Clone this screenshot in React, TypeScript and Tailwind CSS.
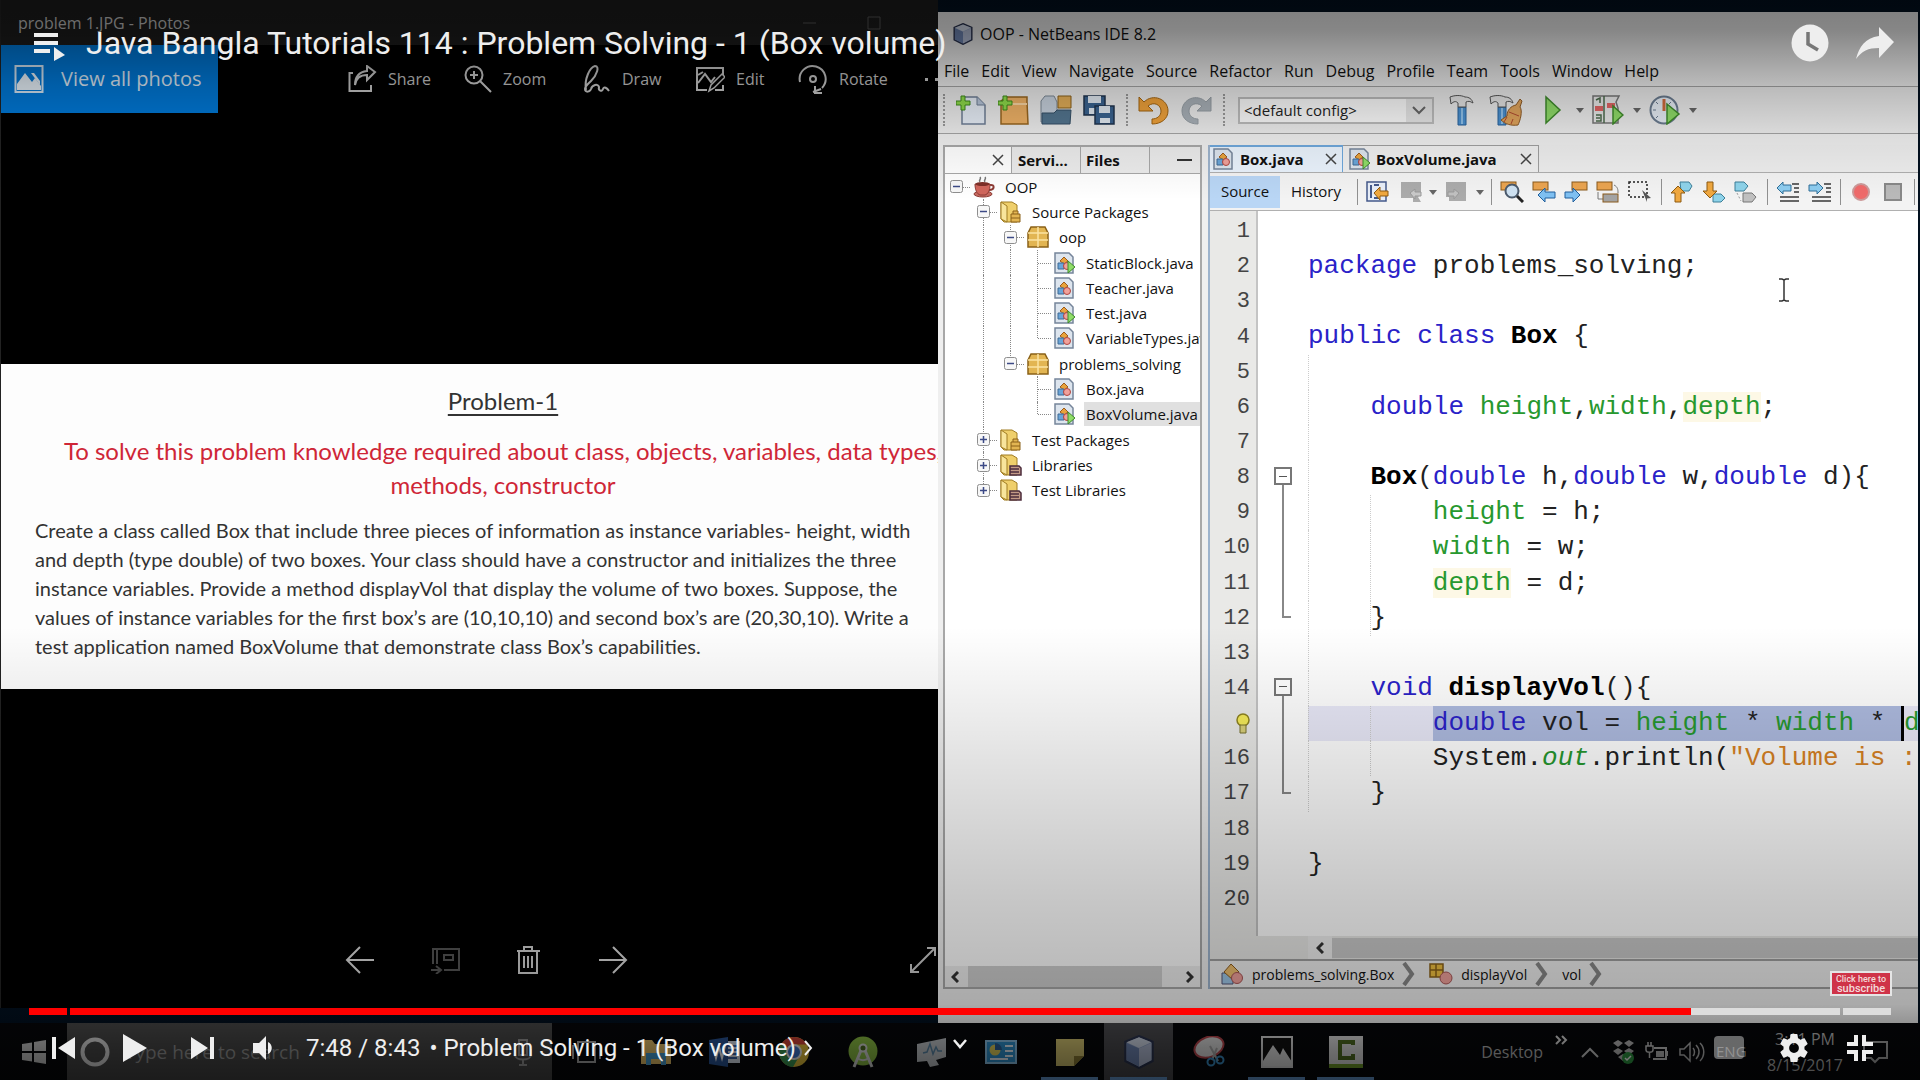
import React from "react";

type Kids = { children?: React.ReactNode };

const UI = "font-['Open_Sans','Noto_Sans',sans-serif]";

function Svg({ w, h, box, children, fill = "none" }: Kids & { w: number; h: number; box?: string; fill?: string }) {
  return (
    <svg width={w} height={h} viewBox={box ?? `0 0 ${w} ${h}`} fill={fill} aria-hidden="true" className="shrink-0">
      {children}
    </svg>
  );
}

/* ---------- Photos window ---------- */

function PhotoTool({ label, children, width }: Kids & { label: string; width: string }) {
  return (
    <button className={`flex shrink-0 items-center gap-[11px] text-left ${width}`}>
      {children}
      <span className="text-[16px] leading-6">{label}</span>
    </button>
  );
}

const bodyLines = [
  "Create a class called Box that include three pieces of information as instance variables- height, width",
  "and depth (type double) of two boxes. Your class should have a constructor and initializes the three",
  "instance variables. Provide a method displayVol that display the volume of two boxes. Suppose, the",
  "values of instance variables for the first box’s are (10,10,10) and second box’s are (20,30,10). Write a",
  "test application named BoxVolume that demonstrate class Box’s capabilities.",
];

function PhotosWindow() {
  return (
    <section className={`flex min-w-0 flex-col overflow-hidden border-l border-[#222] bg-black ${UI}`}>
      <header className="flex h-[45px] items-center bg-[#1c1c1c] pr-[6px] pl-[17px] text-[#c4c4c4]">
        <h2 className="flex-1 text-[16px] leading-6">problem 1.JPG - Photos</h2>
        <button aria-label="Minimize" className="w-[65px] opacity-40">
          <Svg w={16} h={16}><path d="M1 8h13" stroke="#aaa" /></Svg>
        </button>
        <button aria-label="Maximize" className="w-[65px] opacity-40">
          <Svg w={16} h={16}><path d="M1 2h12v12H1z" stroke="#aaa" /></Svg>
        </button>
      </header>
      <div className="flex h-[68px] text-[#c2c2c2]">
        <button className="flex w-[217px] shrink-0 items-center gap-[17px] bg-[#0078d7] pl-[13px] text-[#dce9f6]">
          <Svg w={30} h={30}>
            <path d="M1.500 2h27v26h-27z" stroke="#d5e6f5" strokeWidth="2" />
            <path d="M3 26V20l8-11 7 9 3-4 6 8v4z" fill="#e6f0f8" />
            <path d="m17 9 9 12v-4l-6-8z" fill="#e6f0f8" />
          </Svg>
          <span className="text-[20px] leading-7">View all photos</span>
        </button>
        <div className="flex flex-1 overflow-hidden pb-px pl-[130px]">
          <PhotoTool label="Share" width="w-[115px]">
            <Svg w={29} h={28}>
              <path d="M5 8H1.500v18H23v-6M7 20c1-7 5-10 12-10v5l8-8-8-6v5C11 7 7 12 7 20Z" stroke="#c8c8c8" strokeWidth="2" />
            </Svg>
          </PhotoTool>
          <PhotoTool label="Zoom" width="w-[120px]">
            <Svg w={29} h={28}>
              <circle cx="11" cy="10" r="8.500" stroke="#c8c8c8" strokeWidth="2" />
              <path d="m17 16 11 11M7 10h8M11 6v8" stroke="#c8c8c8" strokeWidth="2" />
            </Svg>
          </PhotoTool>
          <PhotoTool label="Draw" width="w-[112px]">
            <Svg w={28} h={28}>
              <path d="M3 25C1 14 7 2 12 1c5 0 2 9-4 15-3 3-6 5-6 8 0 4 5 3 6 0 1-4 7-6 8-2-1 4 3 5 4 2s4-1 6 2" stroke="#c8c8c8" strokeWidth="2" />
            </Svg>
          </PhotoTool>
          <PhotoTool label="Edit" width="w-[103px]">
            <Svg w={30} h={28}>
              <path d="M12 25H2V3h26v7M28 20v5h-8M3 18l7-9 6 8 4-5M3 10l5-3" stroke="#c8c8c8" strokeWidth="2" />
              <path d="m14 26 2-6L27 9l3 3-11 11z" stroke="#c8c8c8" strokeWidth="1.500" />
            </Svg>
          </PhotoTool>
          <PhotoTool label="Rotate" width="w-[125px]">
            <Svg w={30} h={30}>
              <path d="M2 18A13 13 0 1 1 24 24M15 28l8-3M17 22v7h7" stroke="#c8c8c8" strokeWidth="2" />
              <circle cx="15" cy="15" r="3" stroke="#c8c8c8" strokeWidth="2" />
            </Svg>
          </PhotoTool>
          <button aria-label="More" className="flex shrink-0 items-center">
            <Svg w={18} h={6}><path d="M2 2h3v3H2zM12 2h3v3h-3z" fill="#c8c8c8" /></Svg>
          </button>
        </div>
      </div>
      <div className="flex flex-1 flex-col justify-center">
        <article className="overflow-hidden bg-[#fdfdfd] pt-[20px] pb-[28px] font-['Lato',sans-serif] whitespace-nowrap text-[#333]">
          <div className="w-[1004px] text-center">
            <h3 className="text-[24px] leading-[34px] underline underline-offset-4">Problem-1</h3>
            <p className="mt-[16px] text-[24px] leading-[34px] text-[#cf2637]">
              To solve this problem knowledge required about class, objects, variables, data types,
              <br />
              methods, constructor
            </p>
          </div>
          <div className="mt-[14px] pl-[34px] text-[20px] leading-[29px]">
            {bodyLines.map((l) => (
              <p key={l}>{l}</p>
            ))}
          </div>
        </article>
      </div>
      <footer className="flex h-[68px] items-start pt-[6px] pl-[344px]">
        <button aria-label="Previous" className="w-[85px] shrink-0">
          <Svg w={30} h={28}><path d="M29 14H2M15 1 2 14l13 13" stroke="#ddd" strokeWidth="2" /></Svg>
        </button>
        <button aria-label="Slideshow" className="w-[86px] shrink-0">
          <Svg w={31} h={28}><path d="M3 18V3h26v21H14M7 4v14M14 9h9v5h-9zM1 24h9M6 20l5 4-5 4" stroke="#555" strokeWidth="2" /></Svg>
        </button>
        <button aria-label="Delete" className="w-[82px] shrink-0">
          <Svg w={25} h={28}><path d="M1 5h23M8 4V1h8v3M3 5v22h18V5M8 10v12M12 10v12M16 10v12" stroke="#d2d2d2" strokeWidth="2" /></Svg>
        </button>
        <button aria-label="Next" className="flex-1">
          <Svg w={30} h={28}><path d="M1 14h27M15 1l13 13-13 13" stroke="#ddd" strokeWidth="2" /></Svg>
        </button>
        <button aria-label="Full screen" className="shrink-0 pr-px">
          <Svg w={28} h={28}><path d="m2 26 24-24M18 2h8v8M2 18v8h8" stroke="#ccc" strokeWidth="2" /></Svg>
        </button>
      </footer>
    </section>
  );
}

/* ---------- NetBeans ---------- */

const menus = ["File", "Edit", "View", "Navigate", "Source", "Refactor", "Run", "Debug", "Profile", "Team", "Tools", "Window", "Help"];

function Cube({ size }: { size: number }) {
  return (
    <Svg w={size} h={size} box="0 0 30 30">
      <path d="M15 1 27 6v17l-12 6-12-6V6z" fill="#8fa2c8" stroke="#2b3450" strokeWidth="2" />
      <path d="M15 12 4 7v15l11 6z" fill="#6f86b4" />
      <path d="m15 12 11-5v15l-11 6z" fill="#b5bfd8" />
      <path d="m15 2 11 4.500-11 5L4 6.500z" fill="#d3dbea" />
    </Svg>
  );
}

function Cell({ label, w, children }: Kids & { label: string; w: string }) {
  return (
    <button aria-label={label} className={`flex shrink-0 items-center justify-center ${w}`}>
      {children}
    </button>
  );
}

function Caret() {
  return <Svg w={8} h={6}><path d="M0 1h8L4 6z" fill="#666" /></Svg>;
}

function Grip() {
  return <span className="h-8 w-1 shrink-0 border-l-2 border-dotted border-[#999]" />;
}

function Plus() {
  return <path d="M5 1h4v5h5v4H9v5H5v-5H0V6h5z" fill="#8fdc4a" stroke="#3c8a1b" />;
}

function Hammer() {
  return (
    <>
      <path d="M9 12h8v18H9z" fill="#4a90cf" stroke="#28629c" />
      <path d="M12 13h2v16h-2z" fill="#8fc1ea" />
      <path d="M1 2c5-2 11-2 15 0 4 0 7 2 8 6-3-2-5-2-7-1v5H9V8C7 6 5 6 2 9z" fill="#e4e4e4" stroke="#555" />
    </>
  );
}

function MainToolbar() {
  return (
    <div className="flex h-[48px] items-center border-y border-[#a5a5a5] bg-[#ededed] pl-[5px]">
      <Grip />
      <div className="ml-[2px] flex">
        <Cell label="New file" w="w-[43px]">
          <Svg w={30} h={30}>
            <path d="M6 2h15l8 8v19H6z" fill="#e8eff8" stroke="#6f7f95" strokeWidth="1.500" />
            <path d="M21 2v8h8" fill="#b8c6da" stroke="#6f7f95" />
            <Plus />
          </Svg>
        </Cell>
        <Cell label="New project" w="w-[42px]">
          <Svg w={31} h={30}>
            <path d="M3 6 8 2h21v5l1 22H3z" fill="#efb266" stroke="#98651f" strokeWidth="1.500" />
            <path d="M4 9h25" stroke="#fbd7a4" strokeWidth="2" />
            <Plus />
          </Svg>
        </Cell>
        <Cell label="Open project" w="w-[43px]">
          <Svg w={32} h={30}>
            <path d="M1 27V6l4-5h9l3 6v20z" fill="#c8d2de" stroke="#7b8794" />
            <path d="M18 1h13v12H18z" fill="#e3ae58" stroke="#8a6118" />
            <path d="M2 18h12l3-3h14l-1 14H2z" fill="#53758f" stroke="#344f66" />
          </Svg>
        </Cell>
        <Cell label="Save all" w="w-[43px]">
          <Svg w={32} h={30}>
            <path d="M1 1h21v19H1z" fill="#3a6390" stroke="#20344e" strokeWidth="1.500" />
            <path d="M5 1h13v7H5zM6 13h11v6H6z" fill="#e3ebf3" />
            <path d="M12 11h19v18H12z" fill="#3a6390" stroke="#20344e" strokeWidth="1.500" />
            <path d="M16 11h11v7H16zM17 23h10v5H17z" fill="#e3ebf3" />
          </Svg>
        </Cell>
      </div>
      <span className="ml-[6px] flex"><Grip /></span>
      <div className="ml-[3px] flex">
        <Cell label="Undo" w="w-[42px]">
          <Svg w={32} h={30}>
            <path d="M1 2v14h14l-5-5c6-5 13-1 13 5 0 5-4 8-9 8v5c9 0 16-5 16-13C30 4 15-2 6 7z" fill="#f0a23a" stroke="#a3640f" />
          </Svg>
        </Cell>
        <Cell label="Redo" w="w-[42px]">
          <Svg w={32} h={30}>
            <path d="M31 2v14H17l5-5c-6-5-13-1-13 5 0 5 4 8 9 8v5C9 29 2 24 2 16 2 4 17-2 26 7z" fill="#a9b1b8" stroke="#969ea5" />
          </Svg>
        </Cell>
      </div>
      <span className="ml-[6px] flex"><Grip /></span>
      <div className="relative ml-[11px] flex w-[196px] shrink-0 items-center">
        <select aria-label="Project configuration" className="h-[27px] w-full appearance-none border-2 border-[#bcbcbc] bg-[#fbfbfb] pl-1 text-[15px] leading-5 text-[#222]">
          <option>&lt;default config&gt;</option>
        </select>
        <span className="pointer-events-none absolute top-[2px] right-[2px] flex h-[23px] w-[26px] items-center justify-center bg-[#e6e6e6]">
          <Svg w={14} h={9}><path d="m1 1 6 6 6-6" stroke="#666" strokeWidth="2" /></Svg>
        </span>
      </div>
      <div className="ml-[7px] flex">
        <Cell label="Build" w="w-[42px]"><Svg w={26} h={31}><Hammer /></Svg></Cell>
        <Cell label="Clean and build" w="w-[46px]">
          <Svg w={34} h={31}>
            <Hammer />
            <path d="M27 10l4-6 2 2-2 6c3 4 0 14-2 18-7 1-13-1-17-5l6-4c0-6 4-10 9-11z" fill="#e0a45c" stroke="#8d5a26" />
            <path d="m20 17 10 4M18 22l-3 5M24 24l-2 5" stroke="#b04a2f" />
          </Svg>
        </Cell>
        <Cell label="Run project" w="w-[47px]">
          <Svg w={18} h={30}><path d="M2 2v26l14-13z" fill="#8fdc68" stroke="#3f8a2c" strokeWidth="1.500" /></Svg>
        </Cell>
        <Cell label="Run options" w="w-[8px]"><Caret /></Cell>
        <Cell label="Debug project" w="w-[48px]">
          <Svg w={32} h={30}>
            <path d="M1 1h26l-3 6 2 6v15H1z" fill="#e8e8e8" stroke="#777" strokeWidth="1.500" />
            <path d="M12 1v27M4 5l4-2v5M4 20h5v6H4M4 23h4" stroke="#4c6b4c" strokeWidth="1.500" />
            <path d="M3 11h8v5H3zM15 8h8v5h-8z" fill="#e26464" />
            <path d="M21 11v18l10-9z" fill="#8fdc68" stroke="#3f8a2c" strokeWidth="1.500" />
          </Svg>
        </Cell>
        <Cell label="Debug options" w="w-[10px]"><Caret /></Cell>
        <Cell label="Profile project" w="w-[46px]">
          <Svg w={32} h={30}>
            <circle cx="15" cy="15" r="13.500" fill="#e7eef6" stroke="#6b7c90" strokeWidth="2" />
            <path d="M15 4v12" stroke="#d06a3c" strokeWidth="3" />
            <path d="M4 15h3M7 7l2 2M22 7l-2 2M7 23l2-2" stroke="#6b7c90" />
            <path d="M18 9v20l12-10z" fill="#8fdc68" stroke="#3f8a2c" strokeWidth="1.500" />
          </Svg>
        </Cell>
        <Cell label="Profile options" w="w-[10px]"><Caret /></Cell>
      </div>
    </div>
  );
}

type Kind = "cup" | "srcFolder" | "libFolder" | "pkg" | "java" | "javaMain";

function JavaFile({ main }: { main?: boolean }) {
  return (
    <Svg w={22} h={22}>
      <path d="M1 1h14l4 4v16H1z" fill="#dde5ee" stroke="#76859a" strokeWidth="1.500" />
      <path d="m10 5 4 4-4 3-4-3z" fill="#e8a33c" stroke="#9b5a1c" />
      <path d="M4 11h6v6H4z" fill="#6aa5d8" stroke="#3f6b95" />
      <circle cx="13" cy="14" r="3.500" fill="#f0a19b" stroke="#b0453f" />
      {main && <path d="M14 9v12l7-6z" fill="#8fdc68" stroke="#3f8a2c" />}
    </Svg>
  );
}

function TreeIcon({ kind }: { kind: Kind }) {
  if (kind === "java" || kind === "javaMain") return <JavaFile main={kind === "javaMain"} />;
  if (kind === "cup")
    return (
      <Svg w={22} h={22}>
        <path d="M7 6c-2-2 2-3 0-5M12 6c-2-2 2-3 0-5" stroke="#777" strokeWidth="1.500" />
        <ellipse cx="10" cy="18" rx="9" ry="3" fill="#c66a60" stroke="#8d3a34" />
        <path d="M2 8h15c0 7-2 10-5 11H7C4 18 2 14 2 8Z" fill="#d0665c" stroke="#8d3a34" />
        <path d="M17 9c5-1 5 5-1 5" stroke="#8d3a34" strokeWidth="2" />
        <ellipse cx="9.500" cy="8" rx="7" ry="2" fill="#7d3029" />
      </Svg>
    );
  if (kind === "pkg")
    return (
      <Svg w={22} h={22}>
        <path d="m1 7 3-6h14l3 6v14H1z" fill="#e2b552" stroke="#8a6118" strokeWidth="1.500" />
        <path d="M1 7h20M11 1v20M1 14h20" stroke="#fbe3a2" strokeWidth="1.500" />
      </Svg>
    );
  return (
    <Svg w={22} h={22}>
      <path d="M1 1h11l5 3v17H4l-3-3z" fill="#efcf6b" stroke="#a07c22" />
      <path d="M1 1l6 4v16l-6-3z" fill="#f8e59c" stroke="#a07c22" />
      {kind === "srcFolder" ? (
        <path d="M11 13h9v8h-9zM13 13v-3h5v3M11 17h9" fill="#e2b552" stroke="#8a6118" />
      ) : (
        <path d="M10 12h9l2 2v7H10zM10 15h9M10 18h9" fill="#c39a86" stroke="#4c2c3c" strokeWidth="1.500" />
      )}
    </Svg>
  );
}

type Guide = "none" | "full" | "half";
type Node = { name: string; kind: Kind; guides: Guide[]; box?: "+" | "-"; selected?: boolean };

const tree: Node[] = [
  { name: "OOP", kind: "cup", guides: ["none"], box: "-" },
  { name: "Source Packages", kind: "srcFolder", guides: ["none", "full"], box: "-" },
  { name: "oop", kind: "pkg", guides: ["none", "full", "full"], box: "-" },
  { name: "StaticBlock.java", kind: "javaMain", guides: ["none", "full", "full", "full"] },
  { name: "Teacher.java", kind: "java", guides: ["none", "full", "full", "full"] },
  { name: "Test.java", kind: "javaMain", guides: ["none", "full", "full", "full"] },
  { name: "VariableTypes.java", kind: "java", guides: ["none", "full", "full", "half"] },
  { name: "problems_solving", kind: "pkg", guides: ["none", "full", "half"], box: "-" },
  { name: "Box.java", kind: "java", guides: ["none", "full", "none", "full"] },
  { name: "BoxVolume.java", kind: "javaMain", guides: ["none", "full", "none", "half"], selected: true },
  { name: "Test Packages", kind: "srcFolder", guides: ["none", "full"], box: "+" },
  { name: "Libraries", kind: "libFolder", guides: ["none", "full"], box: "+" },
  { name: "Test Libraries", kind: "libFolder", guides: ["none", "half"], box: "+" },
];

function TreeRow({ node }: { node: Node }) {
  const last = node.guides.length - 1;
  return (
    <li className="flex items-center pl-[5px]">
      {node.guides.map((g, i) => (
        <span key={i} className={`relative flex h-full shrink-0 items-center ${i === last ? "w-[23px]" : "w-[27px]"}`}>
          {g !== "none" && (
            <span className={`absolute top-0 left-[6px] border-l border-dotted border-[#888] ${g === "full" ? "h-full" : "h-1/2"}`} />
          )}
          {i === last && <span className="absolute top-1/2 left-[7px] w-[13px] border-t border-dotted border-[#888]" />}
          {i === last && node.box && (
            <button aria-label={`Toggle ${node.name}`} className="relative">
              <Svg w={13} h={13}>
                <rect x=".5" y=".5" width="12" height="12" rx="2" fill="#f7f7f7" stroke="#8e8e8e" />
                <path d={node.box === "+" ? "M3 6.500h7M6.500 3v7" : "M3 6.500h7"} stroke="#3c4a86" strokeWidth="1.500" />
              </Svg>
            </button>
          )}
        </span>
      ))}
      <TreeIcon kind={node.kind} />
      <span className={`ml-[8px] px-[2px] text-[15px] leading-6 whitespace-nowrap ${node.selected ? "bg-[#e0e0e0]" : ""}`}>{node.name}</span>
    </li>
  );
}

function CloseX() {
  return <Svg w={12} h={12}><path d="m1 1 10 10M11 1 1 11" stroke="#444" strokeWidth="1.500" /></Svg>;
}

function ProjectsPanel() {
  return (
    <aside className="flex w-[259px] shrink-0 flex-col overflow-hidden border-2 border-[#a8a8a8] bg-white">
      <div className="flex h-[27px] shrink-0 border-b border-[#a8a8a8] bg-[#ececec] text-[15px] leading-[26px] font-bold">
        <button aria-label="Close Projects" className="flex w-[66px] items-center justify-end bg-white pr-[7px]"><CloseX /></button>
        <button className="w-[69px] border-l border-[#a8a8a8] pl-[6px] text-left">Servi...</button>
        <button className="w-[69px] border-l border-[#a8a8a8] pl-[5px] text-left">Files</button>
        <button aria-label="Minimize panel" className="flex flex-1 items-center justify-end border-l border-[#a8a8a8] pr-[8px]">
          <Svg w={15} h={4}><path d="M0 2h15" stroke="#333" strokeWidth="2" /></Svg>
        </button>
      </div>
      <ul className="grid h-[329px] shrink-0 auto-rows-fr">
        {tree.map((n) => (
          <TreeRow key={n.name} node={n} />
        ))}
      </ul>
      <div className="mt-auto flex h-[21px] items-center bg-[#f0f0f0] px-[6px]">
        <Svg w={8} h={12}><path d="M7 1 2 6l5 5" stroke="#333" strokeWidth="3" /></Svg>
        <span className="mr-[24px] ml-[9px] h-full flex-1 bg-[#cfcfcf]" />
        <Svg w={8} h={12}><path d="m1 1 5 5-5 5" stroke="#333" strokeWidth="3" /></Svg>
      </div>
    </aside>
  );
}

function Sep({ w = "w-[10px]" }: { w?: string }) {
  return <span className={`flex shrink-0 justify-center ${w}`}><span className="h-[26px] w-px bg-[#909090]" /></span>;
}

function Bar({ x, y, c = "#eaa450" }: { x: number; y: number; c?: string }) {
  return <rect x={x} y={y} width="15" height="8" fill={c} stroke="#8a5a1c" />;
}

function EditorToolbar() {
  return (
    <div className="flex h-[38px] shrink-0 items-center border-b border-[#b0b0b0] bg-[#f3f3f3] text-[15px]">
      <button className="h-[32px] w-[70px] shrink-0 bg-[#b9d6f5]">Source</button>
      <button className="w-[72px] shrink-0">History</button>
      <Sep />
      <Cell label="Last edit" w="w-[32px]">
        <Svg w={24} h={22}>
          <path d="M1 1h19v19H1z" fill="#e8eef8" stroke="#44598a" strokeWidth="1.500" />
          <path d="M5 4v13M8 4h5M8 17h5" stroke="#44598a" strokeWidth="2" />
          <path d="m8 12 6-6v4h8v5h-8v4z" fill="#f0a83f" stroke="#8e5a10" />
        </Svg>
      </Cell>
      <Cell label="Back" w="w-[34px]"><Svg w={22} h={22}><path d="M1 1h20v12l-3 3 3 5h-8v-4H1z" fill="#ababab" /><path d="m10 12 5-4v3h6v4h-6v3z" fill="#c9c9c9" stroke="#999" /></Svg></Cell>
      <Cell label="Back list" w="w-[10px]"><Caret /></Cell>
      <Cell label="Forward" w="w-[36px]"><Svg w={22} h={22}><path d="M1 1h20v19H4v-4H1z" fill="#ababab" /><path d="m14 12-5-4v3H3v4h6v3z" fill="#c0c0c0" stroke="#999" /></Svg></Cell>
      <Cell label="Forward list" w="w-[12px]"><Caret /></Cell>
      <Sep />
      <Cell label="Find selection" w="w-[32px]">
        <Svg w={24} h={22}>
          <Bar x={1} y={1} />
          <circle cx="12" cy="10" r="6.500" fill="#cfe2f2" stroke="#4b5a6c" strokeWidth="2" />
          <path d="m17 15 6 6" stroke="#222" strokeWidth="3" />
        </Svg>
      </Cell>
      <Cell label="Find previous" w="w-[32px]">
        <Svg w={24} h={22}><Bar x={1} y={1} /><path d="m6 14 7-7v4h10v6H13v4z" fill="#7fc0f2" stroke="#205f9c" /></Svg>
      </Cell>
      <Cell label="Find next" w="w-[32px]">
        <Svg w={24} h={22}><Bar x={8} y={1} /><path d="m16 14-7-7v4H1v6h8v4z" fill="#7fc0f2" stroke="#205f9c" /></Svg>
      </Cell>
      <Cell label="Toggle highlight" w="w-[32px]">
        <Svg w={24} h={22}><Bar x={1} y={1} /><path d="M2 11v7h5M18 4c4 2 4 5 4 8" stroke="#777" /><Bar x={7} y={13} c="#a3a3a3" /></Svg>
      </Cell>
      <Cell label="Rectangular selection" w="w-[32px]">
        <Svg w={24} h={22}><path d="M1 1h18v15H1z" stroke="#222" strokeWidth="1.500" strokeDasharray="2 2" /><path d="m14 9 9 8-4 .5V21z" fill="#555" /></Svg>
      </Cell>
      <Sep />
      <Cell label="Previous bookmark" w="w-[32px]">
        <Svg w={24} h={22}><path d="M10 1h9l3 4-3 5h-8z" fill="#8ed3ea" stroke="#3d7f98" /><path d="m8 5 7 7h-4v9H5v-9H1z" fill="#f0a83f" stroke="#8e5a10" /></Svg>
      </Cell>
      <Cell label="Next bookmark" w="w-[32px]">
        <Svg w={24} h={22}><path d="M11 13h8l4 4-4 4h-8z" fill="#8ed3ea" stroke="#3d7f98" /><path d="m8 17 7-7h-4V1H5v9H1z" fill="#f0a83f" stroke="#8e5a10" /></Svg>
      </Cell>
      <Cell label="Toggle bookmark" w="w-[32px]">
        <Svg w={24} h={22}><path d="M1 1h9l4 4-4 5H1z" fill="#8ed3ea" stroke="#3d7f98" /><path d="M9 12h9l4 4-4 5H9z" fill="#c0c0c0" stroke="#777" /><path d="M3 12l4 8" stroke="#999" strokeDasharray="2 2" /></Svg>
      </Cell>
      <Sep />
      <Cell label="Shift left" w="w-[32px]">
        <Svg w={24} h={22}><path d="M16 3h7M18 7h5M18 11h5M4 16h19M4 20h19" stroke="#666" strokeWidth="2" /><path d="m1 7 6-6v3h8v6H7v3z" fill="#8ecdf0" stroke="#2f6f98" /></Svg>
      </Cell>
      <Cell label="Shift right" w="w-[32px]">
        <Svg w={24} h={22}><path d="M16 3h7M18 7h5M18 11h5M4 16h19M4 20h19" stroke="#666" strokeWidth="2" /><path d="m15 7-6-6v3H1v6h8v3z" fill="#8ecdf0" stroke="#2f6f98" /></Svg>
      </Cell>
      <Sep w="w-[9px]" />
      <Cell label="Start macro" w="w-[32px]"><Svg w={20} h={20}><circle cx="10" cy="10" r="8" fill="#ef6a6a" stroke="#c99" strokeWidth="2" /></Svg></Cell>
      <Cell label="Stop macro" w="w-[32px]"><Svg w={20} h={20}><path d="M2 2h16v16H2z" fill="#b9b9b9" stroke="#888" strokeWidth="2" /></Svg></Cell>
      <Sep />
    </div>
  );
}

const K = ({ children }: Kids) => <span className="text-[#2a22c8]">{children}</span>;
const F = ({ children }: Kids) => <span className="text-[#27982f]">{children}</span>;

const code: React.ReactNode[] = [
  "",
  <><K>package</K> problems_solving;</>,
  "",
  <><K>public class</K> <b className="text-black">Box</b> {"{"}</>,
  "",
  <>{"    "}<K>double</K> <F>height</F>,<F>width</F>,<span className="bg-[#fdf8e6] text-[#27982f]">depth</span>;</>,
  "",
  <>{"    "}<b className="text-black">Box</b>(<K>double</K> h,<K>double</K> w,<K>double</K> d){"{"}</>,
  <>{"        "}<F>height</F> = h;</>,
  <>{"        "}<F>width</F> = w;</>,
  <>{"        "}<span className="bg-[#fdf8e6] text-[#27982f]">depth</span> = d;</>,
  "    }",
  "",
  <>{"    "}<K>void</K> <b className="text-black">displayVol</b>(){"{"}</>,
  <>{"        "}<span className="inline-block h-full border-r-[3px] border-black bg-[#aebbe0] align-top"><K>double</K> vol = <F>height</F> * <F>width</F> * </span><F>depth;</F></>,
  <>{"        "}System.<i className="text-[#27982f]">out</i>.println(<span className="text-[#d98324]">"Volume is : "</span>+vol);</>,
  "    }",
  "",
  "}",
  "",
];

const outerGuide = (n: number) => n >= 5 && n <= 17;
const innerGuide = (n: number) => (n >= 9 && n <= 12) || n === 15 || n === 16;

function Fold({ n }: { n: number }) {
  if (n === 8 || n === 14)
    return (
      <span className="flex h-full flex-col items-center">
        <span className="mt-[7px] flex h-[18px] w-[18px] shrink-0 items-center justify-center border-2 border-[#777] bg-white">
          <span className="h-px w-2 bg-[#555]" />
        </span>
        <span className="w-[2px] flex-1 bg-[#888]" />
      </span>
    );
  if ((n > 8 && n < 12) || n === 15 || n === 16) return <span className="mx-auto block h-full w-[2px] bg-[#888]" />;
  if (n === 12 || n === 17) return <span className="ml-[24px] block h-1/2 w-[9px] border-b-2 border-l-2 border-[#888]" />;
  return null;
}

function CodeLine({ n }: { n: number }) {
  return (
    <li className="flex min-h-[35px] min-w-0 items-stretch overflow-hidden">
      <span className="flex w-[48px] shrink-0 items-center justify-end border-r-2 border-[#c4c4c4] bg-[#e9e9e7] pr-[6px] text-[22px] leading-[35px] text-[#444]">
        {n === 15 ? (
          <Svg w={14} h={22}>
            <circle cx="7" cy="7" r="6" fill="#f6ec5a" stroke="#8f8420" strokeWidth="1.500" />
            <path d="M4 12h6v8H4z" fill="#d9d07a" stroke="#77702e" />
          </Svg>
        ) : (
          n
        )}
      </span>
      <span className="block w-[50px] shrink-0"><Fold n={n} /></span>
      <span className={`relative min-w-0 flex-1 leading-[35px] whitespace-pre ${n === 15 ? "bg-[#e9e9f8]" : ""}`}>
        {outerGuide(n) && <span className="absolute top-0 left-0 h-full border-l border-dotted border-[#ccc]" />}
        {innerGuide(n) && <span className="absolute top-0 left-[62px] h-full border-l border-dotted border-[#ccc]" />}
        {code[n - 1]}
      </span>
    </li>
  );
}

function Crumb({ label, children }: Kids & { label: string }) {
  return (
    <button className="flex items-center gap-[8px]">
      {children}
      <span>{label}</span>
      <Svg w={13} h={26}><path d="m2 2 8 11-8 11" stroke="#888" strokeWidth="4" /></Svg>
    </button>
  );
}

function Editor() {
  return (
    <main className="relative flex min-w-0 flex-1 flex-col overflow-hidden border-l-2 border-[#9db3cc] bg-white">
      <div className="flex h-[28px] shrink-0 border-b border-[#b0b0b0] bg-[#eee] text-[15px] leading-6 font-bold">
        <button className="flex w-[133px] items-center border-t-2 border-r border-[#6fa8dc] bg-[#eaf3fd] pb-[2px] pl-[3px]">
          <JavaFile /><span className="ml-[5px] flex-1 text-left">Box.java</span><span className="pr-[5px]"><CloseX /></span>
        </button>
        <button className="flex w-[196px] items-center border-t border-r border-[#a0a0a0] bg-[#f0f0f0] pb-px pl-[6px]">
          <JavaFile main /><span className="ml-[5px] flex-1 text-left">BoxVolume.java</span><span className="pr-[6px]"><CloseX /></span>
        </button>
      </div>
      <EditorToolbar />
      <ol className="grid flex-1 auto-rows-fr bg-[linear-gradient(to_right,#e9e9e7_46px,#c4c4c4_46px,#c4c4c4_48px,#fff_48px)] pt-[3px] pb-[19px] font-['Liberation_Mono',monospace] text-[26px] text-[#222]">
        {code.map((_, i) => (
          <CodeLine key={i} n={i + 1} />
        ))}
      </ol>
      {/* text cursor */}
      <span className="pointer-events-none absolute top-[133px] left-[568px]">
        <Svg w={12} h={24}><path d="M1 1h3l2 1 2-1h3M1 23h3l2-1 2 1h3M6 2v20" stroke="#333" strokeWidth="1.500" /></Svg>
      </span>
      <div className="flex h-[23px] shrink-0 items-center bg-[#e9e9e7] pl-[98px]">
        <span className="flex h-full w-[24px] items-center justify-center bg-[#f0f0f0]"><Svg w={8} h={12}><path d="M7 1 2 6l5 5" stroke="#333" strokeWidth="3" /></Svg></span>
        <span className="h-[20px] flex-1 bg-[#cacaca]" />
      </div>
      <nav className="flex h-[30px] shrink-0 items-center gap-[14px] border-y-2 border-[#a0a0a0] bg-[#f0f0f0] pl-[10px] text-[14px]">
        <Crumb label="problems_solving.Box">
          <Svg w={24} h={22}><path d="M2 10h11v11H2z" fill="#9ec7e8" stroke="#557" /><path d="m11 1 8 8-6 8-9-8z" fill="#efc070" stroke="#8a5a1c" /><circle cx="17" cy="15" r="5.500" fill="#f0a19b" stroke="#a55" /></Svg>
        </Crumb>
        <Crumb label="displayVol">
          <Svg w={24} h={22}><path d="M1 1h13v13H1zM7 1v13M1 7h13" fill="#f0c040" stroke="#8a6118" strokeWidth="1.500" /><circle cx="17" cy="15" r="6" fill="#f0a19b" stroke="#a55" /></Svg>
        </Crumb>
        <Crumb label="vol" />
      </nav>
    </main>
  );
}

function NetBeans() {
  return (
    <section className={`mt-3 mr-[2px] flex min-w-0 flex-col overflow-hidden bg-[#efefef] text-[#111] ${UI}`}>
      <header className="flex h-[44px] items-center gap-[6px] pb-px pl-[14px] text-[16px] text-[#111]">
        <Cube size={22} />
        <h2>OOP - NetBeans IDE 8.2</h2>
      </header>
      <nav className="flex h-[30px] items-center gap-3 pl-[6px] text-[16px] leading-6">
        {menus.map((m) => (
          <button key={m}>{m}</button>
        ))}
      </nav>
      <MainToolbar />
      <div className="flex min-h-0 flex-1 gap-[6px] pt-[11px] pb-[34px] pl-[5px]">
        <ProjectsPanel />
        <Editor />
      </div>
    </section>
  );
}

/* ---------- Windows taskbar ---------- */

function Task({ label, children, on, active }: Kids & { label: string; on?: boolean; active?: boolean }) {
  return (
    <button aria-label={label} className={`flex h-full w-[69px] shrink-0 flex-col items-center px-[6px] ${active ? "bg-[#4a4a4e]" : ""}`}>
      <span className="flex flex-1 items-center pt-1">{children}</span>
      <span className={`h-[3px] w-full ${on ? "bg-[#6da4e0]" : ""}`} />
    </button>
  );
}

function Taskbar() {
  return (
    <footer className={`flex h-[57px] shrink-0 items-center bg-[#06070a] text-[#c8c8c8] ${UI}`}>
      <button aria-label="Start" className="flex w-[67px] shrink-0 justify-center">
        <Svg w={24} h={24}><path d="M0 4l10-1.500V11H0zM12 2l12-2v11H12zM0 13h10v8.500L0 20zM12 13h12v11l-12-2z" fill="#c8c8c8" /></Svg>
      </button>
      <div className="flex h-full w-[485px] shrink-0 items-center bg-[#484848] pl-[13px]">
        <Svg w={30} h={30}><circle cx="15" cy="15" r="12.500" stroke="#ddd" strokeWidth="4" /></Svg>
        <input aria-label="Search" placeholder="Type here to search" className="ml-[15px] min-w-0 flex-1 bg-transparent text-[19px] leading-7 placeholder:text-[#959595]" />
        <span className="pr-[20px]"><Svg w={18} h={28}><path d="M5 2h8v15H5zM1 11v6c0 6 16 6 16 0v-6M9 22v5M5 27h8" stroke="#999" strokeWidth="2" /></Svg></span>
      </div>
      <Task label="Task view"><Svg w={30} h={24}><path d="M6 2h17v20H6zM1 5v14M28 5v14" stroke="#aaa" strokeWidth="2" /></Svg></Task>
      <Task label="File Explorer"><Svg w={32} h={30}><path d="M1 3h11l3 4h16v20H1z" fill="#e8c26a" /><path d="M6 16h20v12h-5v-6H11v6H6z" fill="#48a0d4" /></Svg></Task>
      <Task label="Word"><Svg w={32} h={30}><path d="M16 4h15v22H16z" fill="#dde5f0" /><path d="M19 9h9M19 13h9M19 17h9M19 21h9" stroke="#3a64a8" strokeWidth="2" /><path d="M0 3 19 0v30L0 27z" fill="#2a5699" /><path d="m4 9 3 12 3-11 3 11 3-12" stroke="#fff" strokeWidth="2" /></Svg></Task>
      <Task label="Chrome"><Svg w={32} h={32}><circle cx="16" cy="16" r="15" fill="#e8c33b" /><path d="M16 16 3 8.500A15 15 0 0 1 29 8.500H16z" fill="#d4453a" /><path d="M16 16 3 8.500A15 15 0 0 0 15 31l7-12z" fill="#3c9b54" /><circle cx="16" cy="16" r="7" fill="#3f78d0" stroke="#eee" strokeWidth="2" /></Svg></Task>
      <Task label="Android Studio"><Svg w={32} h={32}><circle cx="16" cy="15" r="14.500" fill="#8cc044" /><path d="M15 12 7 31M17 12l8 19" stroke="#d8d8d8" strokeWidth="3" /><path d="M10 22c4 3 8 3 12 0" stroke="#d8d8d8" strokeWidth="2" /><circle cx="16" cy="12" r="3.500" fill="#4d6d20" stroke="#ddd" strokeWidth="2" /></Svg></Task>
      <Task label="System monitor"><Svg w={34} h={32}><path d="M2 8 31 2v19l-10 3 3 5-9 2-3-6-10 1z" fill="#c2c6ca" /><path d="m8 17 4-1 3-8 3 10 3-7 2 4h4" stroke="#5a86a6" strokeWidth="1.500" /></Svg></Task>
      <Task label="Control Panel"><Svg w={32} h={24}><path d="M1 1h30v22H1z" fill="#2f92cf" stroke="#8cc3e8" strokeWidth="2" /><circle cx="10" cy="10" r="5.500" fill="#e2d05a" /><path d="M10 10V3a7 7 0 0 1 7 7z" fill="#2a5f98" /><path d="M20 6h8M20 11h8M20 16h8M5 19h18" stroke="#e8f2fa" strokeWidth="2" /></Svg></Task>
      <Task label="Notes" on><Svg w={28} h={28}><path d="M0 1h28v17l-10 10H0z" fill="#d6c672" /><path d="M18 28V18h10z" fill="#8c7c35" /></Svg></Task>
      <Task label="NetBeans" on active><Cube size={34} /></Task>
      <Task label="Snipping Tool"><Svg w={34} h={32}><ellipse cx="18" cy="11" rx="15" ry="10" transform="rotate(-20 18 11)" fill="#ddd" stroke="#b8454c" strokeWidth="2" /><path d="m19 10 8 15M26 12l-5 12" stroke="#aaa" strokeWidth="2" /><circle cx="20" cy="26" r="3.500" stroke="#3a8fc8" strokeWidth="2" /><circle cx="29" cy="24" r="3.500" stroke="#3a8fc8" strokeWidth="2" /></Svg></Task>
      <Task label="Photos" on><Svg w={32} h={32}><path d="M1 1h30v30H1z" stroke="#ddd" strokeWidth="2" fill="#111" /><path d="M2 30v-5L12 9l7 10 3-7 9 14v4z" fill="#e4e4e4" /></Svg></Task>
      <Task label="Camtasia" on><Svg w={34} h={32}><path d="M0 0h34v28H0z" fill="#e0e0e0" /><path d="M0 28h34v4H0z" fill="#73a02c" /><path d="M24 9V6H11v16h13v-4" stroke="#4f6d21" strokeWidth="4" /></Svg></Task>
      <div className="ml-auto flex h-full items-center pr-[31px] text-[#b8b8b8]">
        <span className="pt-px text-[16px]">Desktop</span>
        <button aria-label="More toolbars" className="-mt-6 ml-[12px]"><Svg w={13} h={10}><path d="m1 1 4 4-4 4M7 1l4 4-4 4" stroke="#ddd" strokeWidth="2" /></Svg></button>
        <button aria-label="Hidden icons" className="ml-[12px]"><Svg w={20} h={12}><path d="m2 11 8-8 8 8" stroke="#ccc" strokeWidth="2" /></Svg></button>
        <span className="ml-[12px]"><Svg w={23} h={24}><path d="m6 0 5 3-5 4-5-4zM17 0l5 3-5 4-5-4zM6 8l5 3-5 4-5-4zM17 8l5 3-5 4-5-4zM11 14l5 3-5 4-5-4z" fill="#bbb" /><circle cx="16" cy="18" r="6" fill="#2f9a43" /><path d="m13 18 2 2 4-4" stroke="#fff" strokeWidth="1.500" /></Svg></span>
        <span className="ml-[10px]"><Svg w={24} h={20}><path d="M9 6h12v11H8M22 9v5" stroke="#ccc" strokeWidth="2" /><path d="M11 9h8v6h-8z" fill="#bbb" /><path d="M1 4h7v4c0 3-7 3-7 0zM3 0v4M6 0v4M4.500 10v6" stroke="#ccc" strokeWidth="1.500" /></Svg></span>
        <span className="ml-[10px]"><Svg w={26} h={22}><path d="M1 8h4l6-6v18l-6-6H1zM14 7c2 2 2 6 0 8M17 4c4 4 4 10 0 14M21 2c5 5 5 13 0 18" stroke="#bbb" strokeWidth="1.500" /></Svg></span>
        <span className="ml-[11px] w-[33px] text-[15px]">ENG</span>
        <div className="ml-[16px] w-[80px] text-center text-[16px] leading-[26px]">
          <p>3:11 PM</p>
          <p>8/15/2017</p>
        </div>
        <button aria-label="Notifications" className="ml-[18px]"><Svg w={26} h={24}><path d="M1 2h23v16h-8l-4 4-4-4H1z" stroke="#aaa" strokeWidth="2" /></Svg></button>
      </div>
    </footer>
  );
}

/* ---------- Video player overlay ---------- */

function PlayerOverlay() {
  return (
    <div className="absolute inset-0 flex flex-col bg-[linear-gradient(to_bottom,rgba(0,0,0,.48)_0,rgba(0,0,0,.44)_30px,rgba(0,0,0,.22)_85px,rgba(0,0,0,.08)_135px,transparent_200px,transparent_58%,rgba(0,0,0,.11)_70%,rgba(0,0,0,.22)_83%,rgba(0,0,0,.29)_93%,rgba(0,0,0,.5)_97%,rgba(0,0,0,.62)_100%)] font-['Roboto',sans-serif] text-[#eee]">
      <header className="flex h-[86px] items-center pl-[33px]">
        <button aria-label="Playlist" className="mt-2"><Svg w={32} h={30}><path d="M1 1h24v4H1zM1 9h24v4H1zM1 17h16v4H1zM21 15v14l11-6z" fill="#eee" /></Svg></button>
        <h1 className="ml-[21px] flex-1 text-[32px] leading-10 whitespace-nowrap">Java Bangla Tutorials 114 : Problem Solving - 1 (Box volume)</h1>
        <button aria-label="Watch later" className="mr-[27px]">
          <Svg w={38} h={38}><circle cx="19" cy="19" r="18.500" fill="#eee" /><path d="M17 8v12l10 6" stroke="#777" strokeWidth="3.500" /></Svg>
        </button>
        <button aria-label="Share" className="mr-[26px]">
          <Svg w={38} h={34}><path d="M23 1v9C9 12 3 21 0 33c6-8 12-11 23-11v10l15-16z" fill="#eee" /></Svg>
        </button>
      </header>
      <div className="mt-auto flex justify-end pr-[28px]">
        <button className="flex h-[25px] w-[62px] flex-col items-center justify-center border-2 border-[#e5e5e5] bg-[#cf3348] text-[9px] leading-[10px] font-medium text-[#f3dada]">
          <span>Click here to</span>
          <span className="text-[11px] leading-[10px]">subscribe</span>
        </button>
      </div>
      <div role="slider" aria-label="Seek" aria-valuemin={0} aria-valuemax={523} aria-valuenow={468} className="mx-[29px] mt-[12px] flex h-[7px] gap-[3px]">
        <span className="grow-[38] bg-[#f00]" />
        <span className="flex grow-[1768] bg-[#ddd]"><span className="w-[91.6%] bg-[#f00]" /></span>
        <span className="grow-[48] bg-[#ddd]" />
      </div>
      <div className="flex h-[65px] items-center pl-[51px] text-[24px] leading-8">
        <button aria-label="Previous video" className="w-[71px]"><Svg w={25} h={24}><path d="M1 1h4v22H1zM24 1v22L7 12z" fill="#eee" /></Svg></button>
        <button aria-label="Play" className="w-[68px]"><Svg w={26} h={30}><path d="M1 1v28l24-14z" fill="#eee" /></Svg></button>
        <button aria-label="Next video" className="w-[62px]"><Svg w={25} h={24}><path d="M20 1h4v22h-4zM1 1v22l17-11z" fill="#eee" /></Svg></button>
        <button aria-label="Mute" className="w-[54px]"><Svg w={22} h={24}><path d="M1 7h6l7-7v24l-7-7H1zM16 6c5 2 5 10 0 12z" fill="#eee" /></Svg></button>
        <span>7:48 / 8:43</span>
        <span className="ml-[9px] w-[14px]">•</span>
        <button className="flex items-center gap-[8px] whitespace-nowrap">Problem Solving - 1 (Box volume)<Svg w={9} h={16}><path d="m1 1 6 7-6 7" stroke="#eee" strokeWidth="2" /></Svg></button>
        <button aria-label="Chapters" className="-mt-2 ml-auto"><Svg w={16} h={12}><path d="m2 2 6 7 6-7" stroke="#eee" strokeWidth="2.500" /></Svg></button>
        <div className="flex w-[952px] items-center justify-end pr-[46px]">
          <button aria-label="Subtitles" className="mr-[36px] h-[23px] w-[30px] rounded-sm bg-[#ccc]/50" />
          <button aria-label="Settings" className="mr-[38px]">
            <Svg w={28} h={28} box="2 2 20 20"><path d="M19.430 12.980c.04-.32.07-.64.07-.98s-.03-.66-.07-.98l2.110-1.650c.19-.15.24-.42.12-.64l-2-3.460c-.12-.22-.39-.3-.61-.22l-2.490 1c-.52-.4-1.080-.73-1.690-.98l-.38-2.650A.488.488 0 0 0 14 2h-4c-.25 0-.46.18-.49.42l-.38 2.650c-.61.25-1.170.59-1.690.98l-2.490-1c-.23-.09-.49 0-.61.22l-2 3.460c-.13.22-.07.49.12.64l2.110 1.650c-.04.32-.07.65-.07.98s.03.66.07.98l-2.110 1.650c-.19.15-.24.42-.12.64l2 3.460c.12.22.39.3.61.22l2.490-1c.52.4 1.080.73 1.690.98l.38 2.650c.03.24.24.42.49.42h4c.25 0 .46-.18.49-.42l.38-2.650c.61-.25 1.170-.59 1.690-.98l2.490 1c.23.09.49 0 .61-.22l2-3.460c.12-.22.07-.49-.12-.64zM12 15.500a3.500 3.500 0 1 1 0-7 3.500 3.500 0 0 1 0 7z" fill="#eee" /></Svg>
          </button>
          <button aria-label="Exit full screen"><Svg w={28} h={28}><path d="M1 10h9V1M18 1v9h9M1 18h9v9M27 18h-9v9" stroke="#eee" strokeWidth="4" /></Svg></button>
        </div>
      </div>
    </div>
  );
}

export default function App() {
  return (
    <div className="relative flex min-h-screen flex-col overflow-hidden bg-[#02101f]">
      <div className="grid flex-1 grid-cols-[938fr_982fr]">
        <div className="grid min-w-0 pb-[15px]"><PhotosWindow /></div>
        <NetBeans />
      </div>
      <Taskbar />
      <PlayerOverlay />
    </div>
  );
}
